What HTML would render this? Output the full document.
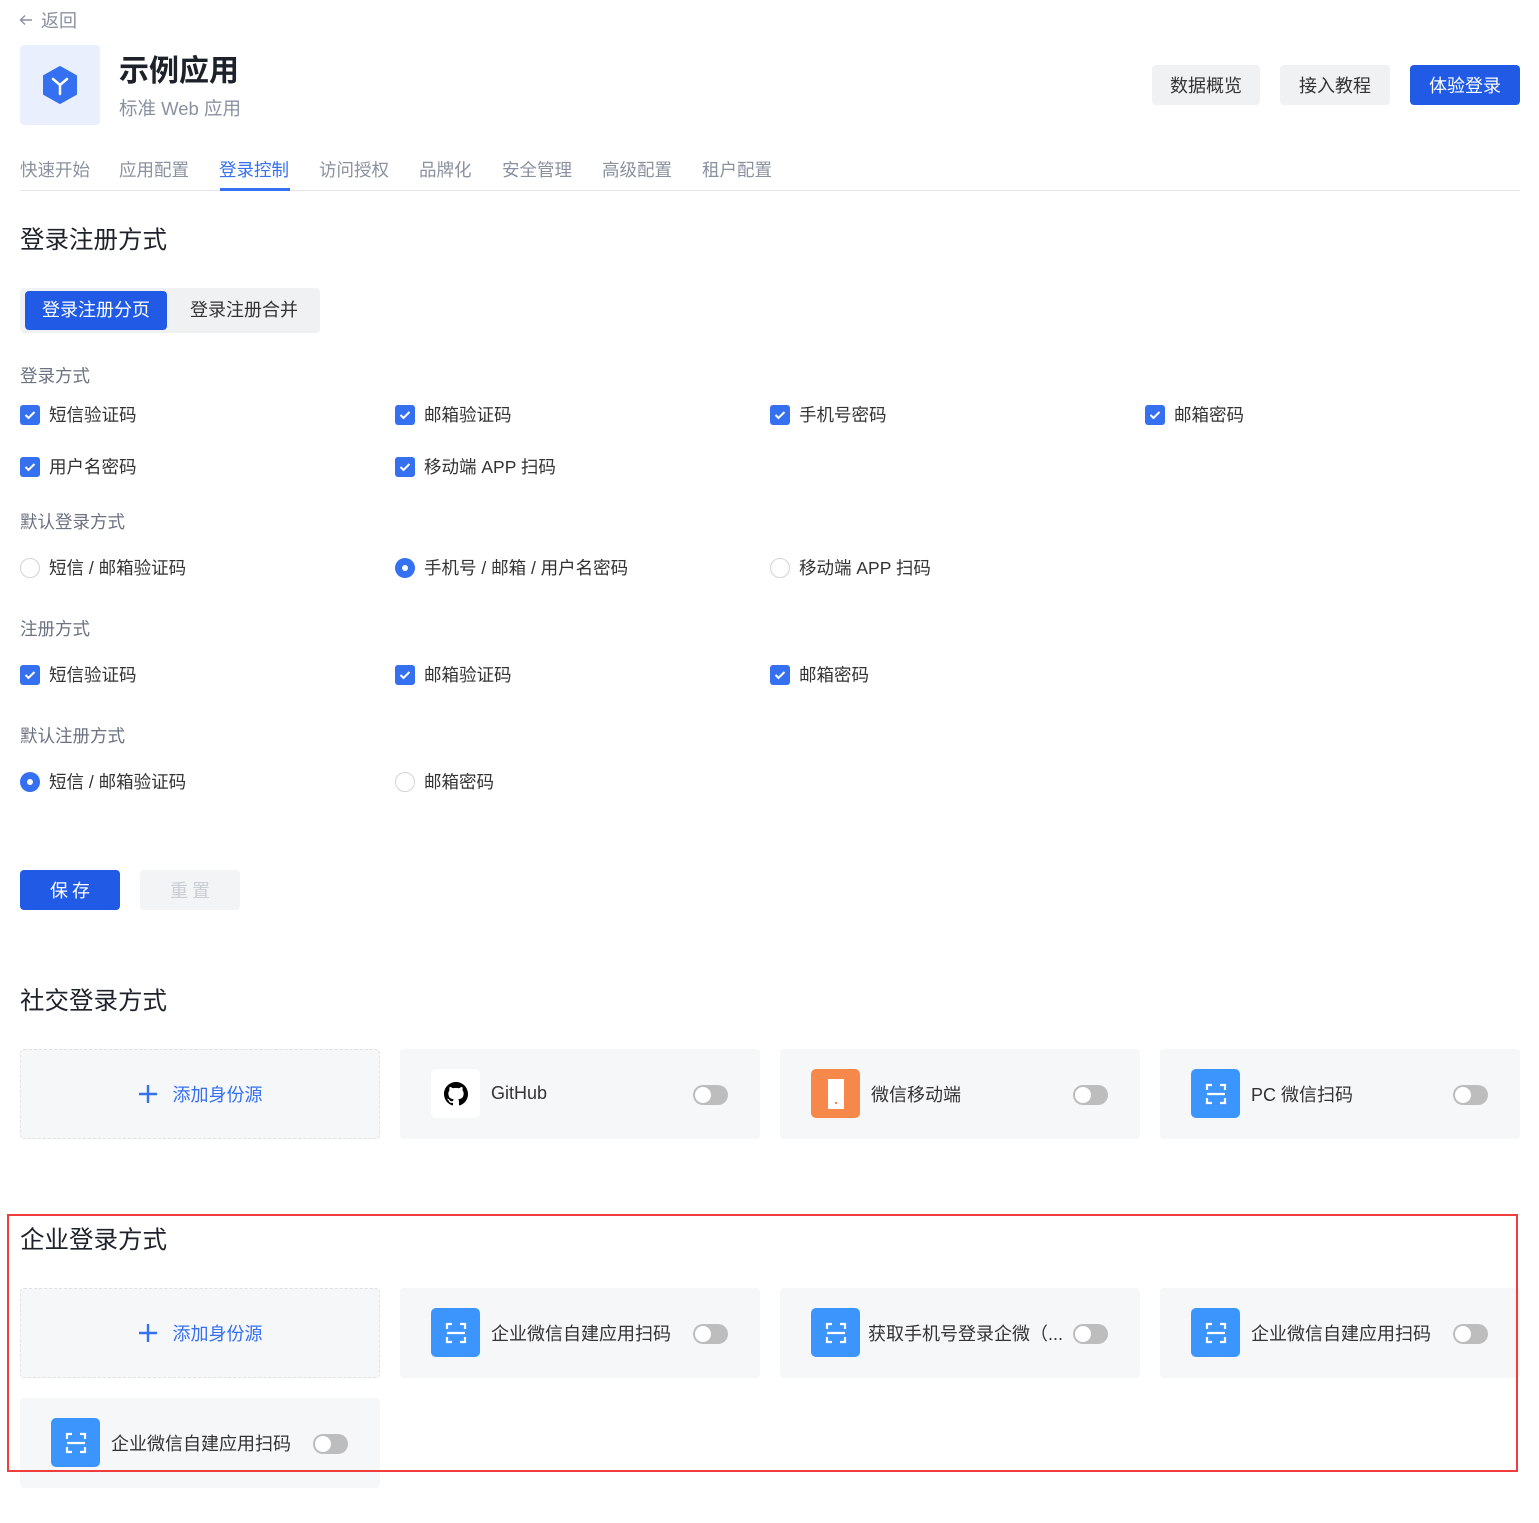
<!DOCTYPE html>
<html><head><meta charset="utf-8">
<style>
*{margin:0;padding:0;box-sizing:border-box}
body{width:1539px;height:1523px;background:#fff;font-family:"Liberation Sans","Noto Sans CJK SC",sans-serif;color:#333;position:relative;overflow:hidden}
.a{position:absolute;white-space:nowrap}
.g{color:#8a919f}
.h2{font-size:24.5px;color:#1d2129}
.lbl{font-size:17.5px;color:#6b7280}
.it{font-size:17.5px;color:#333;display:flex;align-items:center}
.cb{width:20px;height:20px;border-radius:3px;background:#3470f0;margin-right:9px;display:flex;align-items:center;justify-content:center}
.rd{width:20px;height:20px;border-radius:50%;border:1.5px solid #d4d4d4;margin-right:9px}
.rd.on{border:none;background:#3470f0;display:flex;align-items:center;justify-content:center}
.rd.on:after{content:"";width:6px;height:6px;border-radius:50%;background:#fff}
.card{position:absolute;width:360px;height:90px;background:#f6f7f9;border-radius:4px}
.add{border:1px dashed #dfe1e5;display:flex;align-items:center;justify-content:center;color:#3470f0;font-size:18px}
.ic{position:absolute;left:31px;top:20px;width:49px;height:49px;border-radius:5px;display:flex;align-items:center;justify-content:center}
.ct{position:absolute;left:91px;top:32px;font-size:18px;color:#333}
.tg{position:absolute;left:293px;top:36px;width:35px;height:20px;border-radius:10px;background:#bdbdbd}
.tg:after{content:"";position:absolute;left:2px;top:2px;width:16px;height:16px;border-radius:50%;background:#fff}
.tab{font-size:17.5px;color:#8a919f;top:157px}
.btn{position:absolute;height:40px;border-radius:4px;display:flex;align-items:center;justify-content:center;font-size:18px}
</style></head><body>
<svg class="a" style="left:19px;top:14px" width="14" height="12" viewBox="0 0 14 12"><path d="M13 6H2M6 1.5L1.5 6 6 10.5" stroke="#8a919f" stroke-width="1.4" fill="none"/></svg>
<div class="a g" style="left:41px;top:7px;font-size:18px">返回</div>
<div class="a" style="left:20px;top:45px;width:80px;height:80px;background:#e9effd;border-radius:4px;display:flex;align-items:center;justify-content:center">
<svg width="36" height="38" viewBox="0 0 36 38"><path d="M18 1L34 10V28L18 37L2 28V10Z" fill="#3470f0" stroke="#3470f0" stroke-width="2" stroke-linejoin="round"/><path d="M11 13L18 19L25 13M18 19V28" stroke="#fff" stroke-width="2.5" fill="none" stroke-linecap="round"/></svg></div>
<div class="a" style="left:119px;top:46px;font-size:30px;font-weight:bold;color:#1d2129">示例应用</div>
<div class="a g" style="left:119px;top:95px;font-size:18.5px">标准 Web 应用</div>
<div class="btn" style="left:1152px;top:65px;width:108px;background:#f0f1f3;color:#333">数据概览</div>
<div class="btn" style="left:1280px;top:65px;width:110px;background:#f0f1f3;color:#333">接入教程</div>
<div class="btn" style="left:1410px;top:65px;width:110px;background:#215ae5;color:#fff">体验登录</div>
<div class="a tab" style="left:20px">快速开始</div>
<div class="a tab" style="left:119px">应用配置</div>
<div class="a tab" style="left:219px;color:#3470f0">登录控制</div>
<div class="a tab" style="left:319px">访问授权</div>
<div class="a tab" style="left:419px">品牌化</div>
<div class="a tab" style="left:502px">安全管理</div>
<div class="a tab" style="left:602px">高级配置</div>
<div class="a tab" style="left:702px">租户配置</div>
<div class="a" style="left:20px;top:190px;width:1500px;height:1px;background:#e5e6eb"></div>
<div class="a" style="left:220px;top:188px;width:70px;height:3px;background:#3470f0"></div>
<div class="a h2" style="left:20px;top:221px">登录注册方式</div>
<div class="a" style="left:20px;top:288px;width:300px;height:45px;background:#f0f1f3;border-radius:4px"></div>
<div class="btn" style="left:25px;top:291px;width:142px;height:39px;background:#215ae5;color:#fff;font-size:18px;padding-bottom:3px">登录注册分页</div>
<div class="a" style="left:190px;top:296px;font-size:18px;color:#333">登录注册合并</div>

<div class="a lbl" style="left:20px;top:363px">登录方式</div>
<svg width="0" height="0" style="position:absolute"><defs><symbol id="ck" viewBox="0 0 12 10"><path d="M1.5 5L4.5 8L10.5 2" stroke="#fff" stroke-width="2" fill="none"/></symbol></defs></svg>
<div class="a it" style="left:20px;top:402px"><span class="cb"><svg width="12" height="10"><use href="#ck"/></svg></span>短信验证码</div>
<div class="a it" style="left:395px;top:402px"><span class="cb"><svg width="12" height="10"><use href="#ck"/></svg></span>邮箱验证码</div>
<div class="a it" style="left:770px;top:402px"><span class="cb"><svg width="12" height="10"><use href="#ck"/></svg></span>手机号密码</div>
<div class="a it" style="left:1145px;top:402px"><span class="cb"><svg width="12" height="10"><use href="#ck"/></svg></span>邮箱密码</div>
<div class="a it" style="left:20px;top:454px"><span class="cb"><svg width="12" height="10"><use href="#ck"/></svg></span>用户名密码</div>
<div class="a it" style="left:395px;top:454px"><span class="cb"><svg width="12" height="10"><use href="#ck"/></svg></span>移动端 APP 扫码</div>

<div class="a lbl" style="left:20px;top:509px">默认登录方式</div>
<div class="a it" style="left:20px;top:555px"><span class="rd"></span>短信 / 邮箱验证码</div>
<div class="a it" style="left:395px;top:555px"><span class="rd on"></span>手机号 / 邮箱 / 用户名密码</div>
<div class="a it" style="left:770px;top:555px"><span class="rd"></span>移动端 APP 扫码</div>

<div class="a lbl" style="left:20px;top:616px">注册方式</div>
<div class="a it" style="left:20px;top:662px"><span class="cb"><svg width="12" height="10"><use href="#ck"/></svg></span>短信验证码</div>
<div class="a it" style="left:395px;top:662px"><span class="cb"><svg width="12" height="10"><use href="#ck"/></svg></span>邮箱验证码</div>
<div class="a it" style="left:770px;top:662px"><span class="cb"><svg width="12" height="10"><use href="#ck"/></svg></span>邮箱密码</div>

<div class="a lbl" style="left:20px;top:723px">默认注册方式</div>
<div class="a it" style="left:20px;top:769px"><span class="rd on"></span>短信 / 邮箱验证码</div>
<div class="a it" style="left:395px;top:769px"><span class="rd"></span>邮箱密码</div>

<div class="btn" style="left:20px;top:870px;width:100px;background:#215ae5;color:#fff;letter-spacing:4px;padding-left:4px">保存</div>
<div class="btn" style="left:140px;top:870px;width:100px;background:#f3f4f6;color:#c9cdd4;letter-spacing:4px;padding-left:4px">重置</div>

<div class="a h2" style="left:20px;top:982px">社交登录方式</div>
<svg width="0" height="0" style="position:absolute"><defs><symbol id="scan" viewBox="0 0 24 24"><path d="M3 8V3H8M16 3H21V8M21 16V21H16M8 21H3V16M3 12H21" stroke="#fff" stroke-width="2.2" fill="none"/></symbol><symbol id="plus" viewBox="0 0 20 20"><path d="M10 1V19M1 10H19" stroke="#3470f0" stroke-width="2.4"/></symbol></defs></svg>
<div class="card add" style="left:20px;top:1049px"><svg width="20" height="20" style="margin-right:15px"><use href="#plus"/></svg>添加身份源</div>
<div class="card" style="left:400px;top:1049px"><div class="ic" style="background:#fff"><svg width="24" height="24" viewBox="0 0 16 16"><path fill="#000" d="M8 0C3.58 0 0 3.580 0 8c0 3.54 2.29 6.53 5.47 7.59.4.07.55-.17.55-.38v-1.330c-2.23.48-2.7-1.07-2.7-1.07-.36-.92-.89-1.17-.89-1.17-.73-.5.05-.49.05-.49.8.06 1.23.83 1.23.83.71 1.23 1.87.87 2.33.66.07-.52.28-.87.5-1.07-1.78-.2-3.64-.89-3.640-3.95 0-.87.31-1.59.82-2.15-.08-.2-.36-1.02.08-2.12 0 0 .67-.21 2.2.82a7.5 7.5 0 014 0c1.53-1.04 2.2-.82 2.2-.82.44 1.1.16 1.92.08 2.12.51.56.82 1.27.82 2.15 0 3.07-1.87 3.75-3.65 3.95.29.25.54.73.54 1.48v2.2c0 .21.15.46.55.38A8.01 8.01 0 0016 8c0-4.42-3.58-8-8-8z"/></svg></div><div class="ct" style="top:34px">GitHub</div><div class="tg"></div></div>
<div class="card" style="left:780px;top:1049px"><div class="ic" style="background:#f5884a"><svg width="20" height="34" viewBox="0 0 20 34"><rect x="2" y="2" width="16" height="30" fill="#fff"/><rect x="9" y="25" width="2" height="2" fill="#f5884a"/></svg></div><div class="ct">微信移动端</div><div class="tg"></div></div>
<div class="card" style="left:1160px;top:1049px"><div class="ic" style="background:#3b95fd"><svg width="24" height="24"><use href="#scan"/></svg></div><div class="ct">PC 微信扫码</div><div class="tg"></div></div>

<div class="a h2" style="left:20px;top:1221px">企业登录方式</div>
<div class="card add" style="left:20px;top:1288px"><svg width="20" height="20" style="margin-right:15px"><use href="#plus"/></svg>添加身份源</div>
<div class="card" style="left:400px;top:1288px"><div class="ic" style="background:#3b95fd"><svg width="24" height="24"><use href="#scan"/></svg></div><div class="ct">企业微信自建应用扫码</div><div class="tg"></div></div>
<div class="card" style="left:780px;top:1288px"><div class="ic" style="background:#3b95fd"><svg width="24" height="24"><use href="#scan"/></svg></div><div class="ct" style="left:88px">获取手机号登录企微（...</div><div class="tg"></div></div>
<div class="card" style="left:1160px;top:1288px"><div class="ic" style="background:#3b95fd"><svg width="24" height="24"><use href="#scan"/></svg></div><div class="ct">企业微信自建应用扫码</div><div class="tg"></div></div>
<div class="card" style="left:20px;top:1398px"><div class="ic" style="background:#3b95fd"><svg width="24" height="24"><use href="#scan"/></svg></div><div class="ct">企业微信自建应用扫码</div><div class="tg"></div></div>
<div class="a" style="left:7px;top:1214px;width:1511px;height:258px;border:2px solid #f03c3c"></div>
</body></html>
